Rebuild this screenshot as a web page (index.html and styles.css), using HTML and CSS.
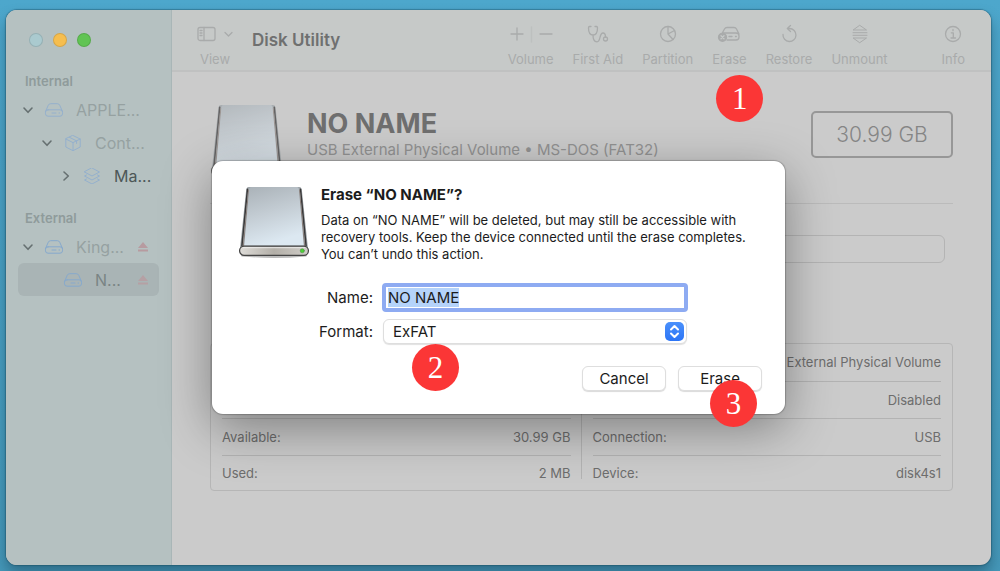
FILE: index.html
```html
<!DOCTYPE html>
<html lang="en">
  <head>
    <meta charset="utf-8">
    <title>Disk Utility</title>
    <link rel="stylesheet" href="styles.css">
  </head>
  <body>
    <!-- shared shapes -->
    <svg class="shapes" aria-hidden="true">
      <defs>
        <linearGradient id="metal" x1="0" y1="0" x2="0.3" y2="1">
          <stop offset="0" stop-color="#a9b1b7"/>
          <stop offset="0.5" stop-color="#c3ccd3"/>
          <stop offset="1" stop-color="#dce8f1"/>
        </linearGradient>
        <linearGradient id="front" x1="0" y1="0" x2="1" y2="0">
          <stop offset="0" stop-color="#dedcd8"/>
          <stop offset="0.5" stop-color="#b3afa8"/>
          <stop offset="1" stop-color="#cfccc7"/>
        </linearGradient>
        <symbol id="drive" viewBox="0 0 70 72">
          <path d="M8 4Q8.500 2 10.500 2H59.500Q61.500 2 62 4L68 61H2Z" fill="#9aa1a6" stroke="none"/>
          <path d="M9.200 4 3.800 59M60.800 4 66.200 59" stroke="#3a3838" stroke-width="1.400"/>
          <path d="M10.300 5 5.300 59M59.700 5 64.700 59" stroke="#8a807c" stroke-width="1"/>
          <path d="M10.800 4Q11 2 12.500 2H57.500Q59 2 59.200 4L64 59H6Z" fill="url(#metal)" stroke="none"/>
          <path d="M4 68.500Q35 71.500 66 68.500" stroke="#bbb" stroke-width="2"/>
          <rect x="1.500" y="59.500" width="67" height="9" rx="4.500" fill="url(#front)" stroke="#444" stroke-width="1.200"/>
          <path d="M5 61H65" stroke="#f4f4f4" stroke-width="0.800"/>
          <circle cx="62.500" cy="64" r="2" fill="#4cd137" stroke="#4a8a40" stroke-width="0.500"/>
        </symbol>
        <symbol id="disk" viewBox="0 0 20 16">
          <path d="M1.500 9.500 4.300 3.200Q5 1.700 6.600 1.700H13.400Q15 1.700 15.700 3.200L18.500 9.500M4 7.800H16Q18.500 7.800 18.500 10.200V11.800Q18.500 14.200 16 14.200H4Q1.500 14.200 1.500 11.800V10.200Q1.500 7.800 4 7.800Z"/>
          <path d="M8 11H12M15 11H15.600"/>
        </symbol>
        <symbol id="down" viewBox="0 0 12 12"><path d="M2 4 6 8.300 10 4"/></symbol>
        <symbol id="right" viewBox="0 0 12 12"><path d="M4 2 8.300 6 4 10"/></symbol>
        <symbol id="eject" viewBox="0 0 12 12"><path d="M6 1 11 7H1ZM1 8.500H11V10.500H1Z"/></symbol>
      </defs>
    </svg>

    <div class="window">
      <!-- sidebar -->
      <aside class="sidebar">
        <div class="lights">
          <span class="light close"></span>
          <span class="light minimize"></span>
          <span class="light zoom"></span>
        </div>
        <h2>Internal</h2>
        <ul>
          <li class="row dim">
            <svg class="chevron"><use href="#down"/></svg>
            <svg class="row-icon"><use href="#disk"/></svg>
            <span>APPLE...</span>
          </li>
          <li class="row level-two dim">
            <svg class="chevron"><use href="#down"/></svg>
            <svg class="row-icon" viewBox="0 0 20 16">
              <path d="M10 0.500 17.200 4V12L10 15.700 2.800 12V4ZM2.800 4 10 7.600 17.200 4M10 7.600V15.700M6.400 2.300 13.600 5.900V8.500"/>
            </svg>
            <span>Cont...</span>
          </li>
          <li class="row level-three strong">
            <svg class="chevron"><use href="#right"/></svg>
            <svg class="row-icon" viewBox="0 0 20 16">
              <path d="M10 0 17.500 4 10 8 2.500 4ZM4.500 7 2.500 8 10 12 17.500 8 15.500 7M4.500 11 2.500 12 10 16 17.500 12 15.500 11"/>
            </svg>
            <span>Ma...</span>
          </li>
        </ul>
        <h2>External</h2>
        <ul>
          <li class="row dim">
            <svg class="chevron"><use href="#down"/></svg>
            <svg class="row-icon blue"><use href="#disk"/></svg>
            <span>King...</span>
            <svg class="eject"><use href="#eject"/></svg>
          </li>
          <li class="row level-two selected">
            <span class="chevron"></span>
            <svg class="row-icon blue"><use href="#disk"/></svg>
            <span>N...</span>
            <svg class="eject faint"><use href="#eject"/></svg>
          </li>
        </ul>
      </aside>

      <div class="content">
        <!-- toolbar -->
        <header class="toolbar">
          <button class="tool">
            <svg width="36" height="20" viewBox="0 0 36 20">
              <rect x="1" y="3.500" width="17" height="13" rx="2"/>
              <path d="M7 3.500V16.500M3 6.500H5M3 9H5M3 11.500H5M28 8.500 31.500 12 35 8.500"/>
            </svg>
            View
          </button>
          <h1>Disk Utility</h1>
          <div class="tools">
            <button class="tool">
              <svg width="44" height="20" viewBox="0 0 44 20">
                <path d="M2 10H14M8 4V16M31 10H43"/>
                <path d="M22.500 3V18" opacity="0.300"/>
              </svg>
              Volume
            </button>
            <button class="tool">
              <svg width="22" height="20" viewBox="0 0 22 20">
                <path d="M4 2.500H2.500Q1.500 2.500 1.500 4C1.500 8 3 11 6 11C9 11 10.500 8 10.500 4Q10.500 2.500 9.500 2.500H8M6 11C6 15 7 17.800 10 17.800C14 17.800 12 9 16 9C18.500 9 18.500 11 18.500 13"/>
                <circle cx="18.500" cy="15" r="2"/>
              </svg>
              First Aid
            </button>
            <button class="tool">
              <svg width="20" height="20" viewBox="0 0 20 20">
                <circle cx="10" cy="10" r="7.500"/>
                <path d="M10 2.500V10L16.500 6.500M10 10 15 15.500"/>
              </svg>
              Partition
            </button>
            <button class="tool">
              <svg width="24" height="20" viewBox="0 0 24 20">
                <path d="M5 9.500 7.500 5Q8.300 3.500 10 3.500H17Q18.700 3.500 19.500 5L22 10M6 9H19Q22 9 22 12V13Q22 16 19 16H10M12 12.500H15M18.500 12.500H19.300"/>
                <circle class="solid" cx="5.500" cy="13.300" r="4"/>
                <path class="cross" d="M4 11.800 7 14.800M7 11.800 4 14.800"/>
              </svg>
              Erase
              <span class="badge badge-one">1</span>
            </button>
            <button class="tool">
              <svg width="20" height="20" viewBox="0 0 20 20">
                <path d="M4 10.500A6.500 6.500 0 1 0 10.500 4.500H8.500M11.500 1.500 8.300 4.500 11.500 7.500"/>
              </svg>
              Restore
            </button>
            <button class="tool">
              <svg class="thin" width="20" height="20" viewBox="0 0 20 20">
                <path d="M10 1.500 16.500 6H3.500ZM3 8.700H17M3 11.300H17M3.500 14H16.500L10 18.500Z"/>
              </svg>
              Unmount
            </button>
            <button class="tool info">
              <svg width="20" height="20" viewBox="0 0 20 20">
                <circle cx="10" cy="10" r="7.500"/>
                <path d="M8.300 8.800H10.300V14M8 14H12.500M10 5.500V6.700"/>
              </svg>
              Info
            </button>
          </div>
        </header>

        <!-- volume details -->
        <main>
          <section class="volume">
            <svg class="volume-icon"><use href="#drive"/></svg>
            <div class="volume-name">
              <h2>NO NAME</h2>
              <p>USB External Physical Volume • MS-DOS (FAT32)</p>
            </div>
            <div class="capacity">30.99 GB</div>
          </section>
          <div class="usage">
            <div class="usage-bar"></div>
          </div>
          <section class="details">
            <table>
              <tr><th></th><td></td></tr>
              <tr><th></th><td></td></tr>
              <tr><th>Available:</th><td>30.99 GB</td></tr>
              <tr><th>Used:</th><td>2 MB</td></tr>
            </table>
            <table>
              <tr><th></th><td>External Physical Volume</td></tr>
              <tr><th></th><td>Disabled</td></tr>
              <tr><th>Connection:</th><td>USB</td></tr>
              <tr><th>Device:</th><td>disk4s1</td></tr>
            </table>
          </section>
        </main>
      </div>

      <!-- erase sheet -->
      <form class="sheet" role="dialog" aria-labelledby="sheet-title">
        <svg class="sheet-icon"><use href="#drive"/></svg>
        <div class="sheet-text">
          <h2 id="sheet-title">Erase “NO NAME”?</h2>
          <p>Data on “NO NAME” will be deleted, but may still be accessible with recovery tools. Keep the device connected until the erase completes. You can’t undo this action.</p>
        </div>
        <div class="fields">
          <label for="name">Name:</label>
          <input type="text" id="name" value="NO NAME" autocomplete="off" spellcheck="false">
          <label for="format">Format:</label>
          <div class="select-wrap">
            <select id="format">
              <option>ExFAT</option>
            </select>
            <svg class="stepper" viewBox="0 0 19 19"><path d="M6 7.500 9.500 4 13 7.500M6 11.500 9.500 15 13 11.500"/></svg>
            <span class="badge badge-two">2</span>
          </div>
        </div>
        <div class="actions">
          <button type="button">Cancel</button>
          <button type="button">Erase<span class="badge badge-three">3</span></button>
        </div>
      </form>
    </div>
    <script>
      const nameInput = document.querySelector('#name');
      nameInput.focus();
      nameInput.select();
    </script>
  </body>
</html>
```
FILE: styles.css
```css
* {
  box-sizing: border-box;
}
body {
  margin: 0;
  padding: 10px 9px 6px 6px;
  min-height: 100vh;
  display: flex;
  background: linear-gradient(#4da7cc, #4598b9);
  font-family: Inter, "Liberation Sans", sans-serif;
  font-size: 13px;
}
h1, h2, p, ul {
  margin: 0;
  padding: 0;
}
button, input, select {
  font-family: inherit;
}
svg {
  fill: none;
  stroke: currentColor;
  stroke-linecap: round;
  stroke-linejoin: round;
  flex-shrink: 0;
}
.shapes {
  position: absolute;
  width: 0;
  height: 0;
}
.window {
  position: relative;
  flex: 1;
  display: flex;
  border-radius: 11px;
  background-color: #cbcbcb;
  box-shadow: 0 0 1px 1px rgba(20, 70, 90, 0.4), 0 8px 14px rgba(0, 30, 45, 0.35);
}

/* Sidebar */
.sidebar {
  width: 166px;
  flex-shrink: 0;
  padding: 0 12px;
  background-color: #b5c1c1;
  border-right: 1px solid #a9b6b7;
  border-radius: 11px 0 0 11px;
}
.lights {
  display: flex;
  gap: 10px;
  height: 60px;
  padding-left: 11px;
  align-items: center;
}
.light {
  width: 14px;
  height: 14px;
  border-radius: 50%;
  border: 1px solid rgba(0, 0, 0, 0.12);
}
.close {
  background-color: #aacacf;
}
.minimize {
  background-color: #f6be4f;
}
.zoom {
  background-color: #61c454;
}
.sidebar h2 {
  padding-left: 7px;
  font-size: 13px;
  font-weight: 600;
  line-height: 23px;
  color: #8f9b9b;
}
.sidebar ul {
  list-style: none;
  margin-bottom: 15px;
}
.row {
  display: flex;
  align-items: center;
  height: 33px;
  padding: 0 10px 0 4px;
  border-radius: 6px;
  font-size: 16px;
  color: #7a8484;
}
.level-two {
  padding-left: 23px;
}
.level-three {
  padding-left: 42px;
}
.dim {
  color: #96a1a1;
}
.strong {
  color: #4d5757;
}
.selected {
  background-color: #a9b4b5;
}
.chevron {
  width: 12px;
  height: 12px;
  margin-right: 10px;
  color: #667071;
  stroke-width: 1.6px;
}
.row-icon {
  width: 20px;
  height: 16px;
  margin-right: 12px;
  color: #94b0cd;
}
.row-icon.blue {
  color: #86a9cd;
}
.eject {
  width: 12px;
  height: 12px;
  margin-left: auto;
  fill: #b79ba0;
  stroke: none;
}
.faint {
  fill: #b5a0a4;
}

/* Toolbar */
.content {
  flex: 1;
  min-width: 0;
}
.toolbar {
  display: flex;
  height: 62px;
  padding: 0 26px 0 25px;
  border-bottom: 2px solid #c0c1c1;
  border-radius: 0 11px 0 0;
  background-color: #c6c9c8;
}
.toolbar h1 {
  padding-left: 19px;
  font-size: 17px;
  font-weight: 600;
  line-height: 60px;
  color: #6f7070;
}
.tools {
  display: flex;
  gap: 19px;
  margin-left: auto;
}
.tool {
  position: relative;
  display: flex;
  flex-direction: column;
  align-items: center;
  gap: 7px;
  padding: 14px 0 0;
  border: none;
  background: none;
  font-size: 13px;
  line-height: 16px;
  color: #a9abab;
}
.tool svg {
  stroke-width: 1.3px;
}
.tool .thin {
  stroke-width: 1px;
}
.tool .solid {
  fill: #a9abab;
}
.tool .cross {
  stroke: #c6c9c8;
}
.info {
  margin-left: 35px;
}

/* Volume details */
main {
  padding: 30px 38px;
}
.volume {
  display: flex;
}
.volume-icon {
  width: 74px;
  height: 78px;
  opacity: 0.7;
}
.volume-name {
  flex: 1;
  padding-left: 23px;
}
.volume-name h2 {
  padding-top: 6px;
  font-size: 27px;
  line-height: 32px;
  color: #6f6f6f;
}
.volume-name p {
  font-size: 15px;
  line-height: 20px;
  color: #929292;
}
.capacity {
  width: 142px;
  height: 47px;
  margin-top: 9px;
  border: 2px solid #979797;
  border-radius: 5px;
  text-align: center;
  font-size: 21px;
  font-weight: 300;
  line-height: 43px;
  color: #858585;
}
.usage {
  margin-top: 23px;
  padding: 31px 8px 0;
  border-top: 1px solid #bbb;
}
.usage-bar {
  height: 28px;
  border: 1px solid #b4b4b4;
  border-radius: 6px;
}
.details {
  display: grid;
  grid-template-columns: 1fr 1fr;
  margin-top: 80px;
  border: 1px solid #b6b6b6;
  border-radius: 4px;
}
.details table {
  margin: 0 11px;
  border-collapse: collapse;
  color: #6d6d6d;
}
.details tr {
  height: 37px;
  border-bottom: 1px solid #b3b3b3;
}
.details tr:last-child {
  height: 35px;
  border-bottom: none;
}
.details table + table {
  position: relative;
}
.details table + table::before {
  content: "";
  position: absolute;
  top: 11px;
  bottom: 11px;
  left: -12px;
  border-left: 1px solid #b3b3b3;
}
.details th {
  padding: 0;
  font-weight: 400;
  text-align: left;
}
.details td {
  padding: 0;
  text-align: right;
}

/* Erase sheet */
.sheet {
  position: absolute;
  top: 151px;
  left: 0;
  right: 0;
  width: 573px;
  margin: 0 auto;
  padding: 24px 23px 23px 26px;
  display: grid;
  grid-template-columns: 72px 1fr;
  column-gap: 11px;
  border-radius: 11px;
  background-color: #fff;
  box-shadow: 0 0 1px 1px rgba(0, 0, 0, 0.2), 0 14px 50px rgba(0, 0, 0, 0.38);
  color: #1c1c1c;
}
.sheet-icon {
  width: 72px;
  height: 74px;
}
.sheet-text h2 {
  font-size: 15px;
  line-height: 20px;
}
.sheet-text p {
  padding-top: 7px;
  font-size: 13px;
  line-height: 17px;
}
.fields {
  grid-column: 1 / 3;
  display: grid;
  grid-template-columns: 135px 306px;
  column-gap: 9px;
  row-gap: 7px;
  margin-top: 20px;
  align-items: center;
}
.fields label {
  text-align: right;
  font-size: 15px;
}
.fields input {
  height: 29px;
  padding: 0 2px;
  border: 4px solid #8eabf2;
  border-radius: 4px;
  outline: none;
  font-size: 15px;
  color: #1c1c1c;
}
.fields input::selection {
  background-color: #b5d3fa;
  color: #1c1c1c;
}
.select-wrap {
  position: relative;
  margin: 0 1px;
}
.fields select {
  display: block;
  width: 100%;
  height: 25px;
  padding: 0 9px;
  appearance: none;
  border: 1px solid #dedede;
  border-radius: 6px;
  background-color: #fff;
  box-shadow: 0 1px 1px rgba(0, 0, 0, 0.12);
  font-size: 15px;
  color: #1c1c1c;
}
.stepper {
  position: absolute;
  top: 3px;
  right: 3px;
  width: 19px;
  height: 19px;
  border-radius: 5px;
  background: linear-gradient(#4a90fb, #2c75f6);
  color: #fff;
  stroke-width: 2px;
}
.actions {
  grid-column: 1 / 3;
  display: flex;
  justify-content: flex-end;
  gap: 12px;
  margin-top: 22px;
}
.actions button {
  position: relative;
  width: 84px;
  height: 25px;
  padding: 0;
  border: 1px solid #dedede;
  border-radius: 6px;
  background-color: #fff;
  box-shadow: 0 1px 1px rgba(0, 0, 0, 0.15);
  font-size: 15px;
  color: #1c1c1c;
}

/* Numbered step badges */
.badge {
  position: absolute;
  width: 47px;
  height: 47px;
  border-radius: 50%;
  background-color: #fb3636;
  font-family: "Liberation Serif", serif;
  font-size: 31px;
  line-height: 47px;
  text-align: center;
  color: #fff;
}
.badge-one {
  top: 65px;
  left: 4px;
}
.badge-two {
  top: 25px;
  left: 29px;
}
.badge-three {
  top: 13px;
  left: 31px;
}
```
